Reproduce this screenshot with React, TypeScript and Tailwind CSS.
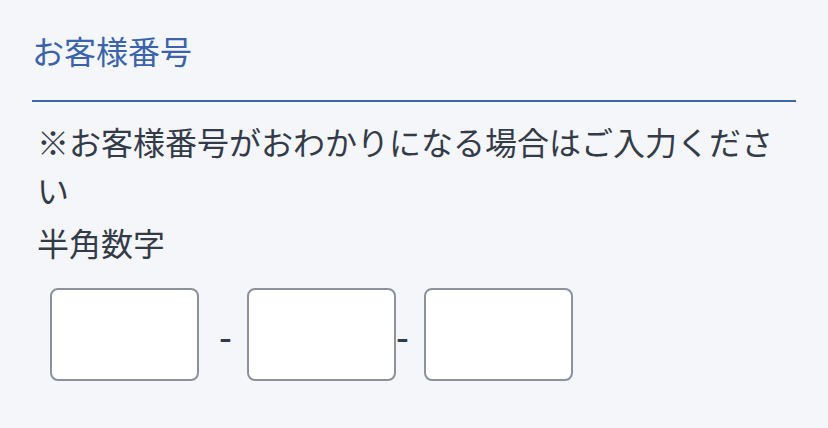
const font = '"Noto Sans CJK JP", "Noto Sans", sans-serif'

function CodeBox({ className = '' }: { className?: string }) {
  return (
    <input
      type="text"
      inputMode="numeric"
      className={`h-[93px] w-[149px] shrink-0 rounded-[8px] border-[2px] border-[#8c919c] bg-white ${className}`}
    />
  )
}

export default function App() {
  return (
    <div className="h-[428px] w-[828px] overflow-hidden bg-[#f4f6fa]" style={{ fontFamily: font }}>
      <section className="px-[32px] pt-[26px]">
        <h2 className="border-b-[2px] border-[#3e66ab] pb-[26px] text-[32px] leading-[48px] font-normal text-[#3a63ac]">
          お客様番号
        </h2>
        <div className="pl-[5px] pt-[15px] text-[32px] leading-[48px] text-[#343b48]">
          <p>※お客様番号がおわかりになる場合はご入力ください</p>
          <p className="mt-[5px]">半角数字</p>
        </div>
        <div className="mt-[22px] flex items-center pl-[18px] text-[#343b48]">
          <CodeBox />
          <span className="ml-[20px] w-[10px] text-[36px] font-medium leading-none">-</span>
          <CodeBox className="ml-[18px]" />
          <span className="w-[10px] text-[36px] font-medium leading-none">-</span>
          <CodeBox className="ml-[18px]" />
        </div>
      </section>
    </div>
  )
}
